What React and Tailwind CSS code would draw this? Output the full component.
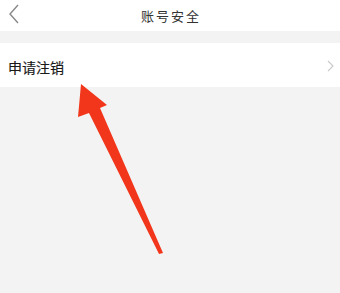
import React from "react";

export default function App() {
  return (
    <div
      className="relative w-[340px] h-[293px] bg-[#f3f3f3] overflow-hidden"
      style={{ fontFamily: '"Noto Sans CJK SC", "Noto Sans", sans-serif' }}
    >
      {/* header */}
      <div className="h-[31px] bg-white flex items-center relative">
        <svg className="absolute left-[8px] top-[4px]" width="12" height="20" viewBox="0 0 12 20">
          <path d="M10 1 L2 10 L10 19" fill="none" stroke="#888" strokeWidth="1.4" />
        </svg>
        <div className="flex-1 text-center text-[13px] text-[#333] tracking-[2px] pl-[2px]">
          账号安全
        </div>
      </div>

      <div className="h-[12px]" />

      {/* row */}
      <div className="h-[44px] bg-white flex items-center justify-between pl-[8px] pr-[6px] pt-[4px]">
        <span className="text-[14px] text-[#1a1a1a] [-webkit-text-stroke:0.2px_#1a1a1a]">申请注销</span>
        <svg width="7" height="12" viewBox="0 0 7 12" className="-mt-[3px]">
          <path d="M1 1 L6 6 L1 11" fill="none" stroke="#ccc" strokeWidth="1.2" />
        </svg>
      </div>

      {/* arrow overlay */}
      <svg className="absolute left-0 top-0" width="340" height="293" viewBox="0 0 340 293">
        <polygon
          points="81,84 107,105 100,108 163,253 159,254 89,113 78,117"
          fill="#f2361b"
        />
      </svg>
    </div>
  );
}
